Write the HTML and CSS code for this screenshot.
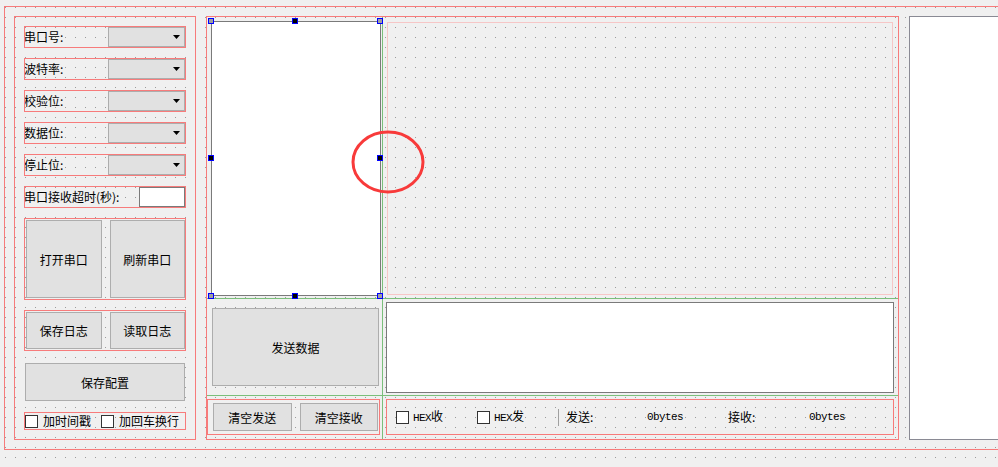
FILE: index.html
```html
<!DOCTYPE html>
<html lang="zh-CN">
<head>
    <meta charset="UTF-8">
    <title>串口调试助手 - 设计器</title>
    <link rel="stylesheet" href="styles.css">
</head>
<body>
    <div class="form lay">
        <!-- left settings column -->
        <div class="side lay">
            <div class="field lay">
                <span class="label">串口号:</span>
                <div class="combo"><svg class="arrow" width="7" height="4" viewBox="0 0 7 4"><polygon points="0,0 7,0 3.5,4" fill="#000"/></svg></div>
            </div>
            <div class="field lay">
                <span class="label">波特率:</span>
                <div class="combo"><svg class="arrow" width="7" height="4" viewBox="0 0 7 4"><polygon points="0,0 7,0 3.5,4" fill="#000"/></svg></div>
            </div>
            <div class="field lay">
                <span class="label">校验位:</span>
                <div class="combo"><svg class="arrow" width="7" height="4" viewBox="0 0 7 4"><polygon points="0,0 7,0 3.5,4" fill="#000"/></svg></div>
            </div>
            <div class="field lay">
                <span class="label">数据位:</span>
                <div class="combo"><svg class="arrow" width="7" height="4" viewBox="0 0 7 4"><polygon points="0,0 7,0 3.5,4" fill="#000"/></svg></div>
            </div>
            <div class="field lay">
                <span class="label">停止位:</span>
                <div class="combo"><svg class="arrow" width="7" height="4" viewBox="0 0 7 4"><polygon points="0,0 7,0 3.5,4" fill="#000"/></svg></div>
            </div>
            <div class="field lay">
                <span class="label">串口接收超时(秒):</span>
                <div class="edit"></div>
            </div>

            <div class="btn-row big lay">
                <button class="btn">打开串口</button>
                <button class="btn">刷新串口</button>
            </div>
            <div class="btn-row lay">
                <button class="btn">保存日志</button>
                <button class="btn">读取日志</button>
            </div>
            <div class="save">
                <button class="btn">保存配置</button>
            </div>
            <div class="checks lay">
                <span class="check"><span class="box"></span><span>加时间戳</span></span>
                <span class="check"><span class="box"></span><span>加回车换行</span></span>
            </div>
        </div>

        <!-- main grid -->
        <div class="main lay">
            <div class="cell recv-cell">
                <div class="browser">
                    <span class="handle corner h-tl"></span>
                    <span class="handle h-tm"></span>
                    <span class="handle corner h-tr"></span>
                    <span class="handle h-ml"></span>
                    <span class="handle h-mr"></span>
                    <span class="handle corner h-bl"></span>
                    <span class="handle h-bm"></span>
                    <span class="handle corner h-br"></span>
                </div>
            </div>
            <div class="cell spacer-cell g-left">
                <div class="spacer"></div>
            </div>
            <div class="cell send-cell g-top">
                <button class="btn">发送数据</button>
            </div>
            <div class="cell input-cell g-top g-left">
                <div class="textedit"></div>
            </div>
            <div class="cell clear-cell g-top">
                <div class="clear-row lay">
                    <button class="btn">清空发送</button>
                    <button class="btn">清空接收</button>
                </div>
            </div>
            <div class="cell status-cell g-top g-left">
                <div class="status lay">
                    <span class="check slot"><span class="box"></span><span><span class="mono">HEX</span>收</span></span>
                    <span class="check slot"><span class="box"></span><span><span class="mono">HEX</span>发</span></span>
                    <span class="vline"></span>
                    <span class="slot">发送:</span>
                    <span class="slot mono">0bytes</span>
                    <span class="slot">接收:</span>
                    <span class="slot mono">0bytes</span>
                </div>
            </div>
        </div>

        <div class="right-pane"></div>
    </div>

    <svg class="mark" width="76" height="66" viewBox="0 0 76 66">
        <ellipse cx="38" cy="33" rx="35" ry="30" fill="none" stroke="#f83a3a" stroke-width="3"/>
    </svg>
</body>
</html>
```

FILE: styles.css
```css
* {
    box-sizing: border-box;
}
html, body {
    margin: 0;
}
body {
    position: relative;
    width: 998px;
    height: 467px;
    overflow: hidden;
    background-color: #f0f0f0;
    /* designer grid dots */
    background-image: radial-gradient(circle at 0.5px 0.5px, #9a9a9a 0.75px, transparent 0.8px);
    background-size: 10px 10px;
    background-position: 5px 7px;
    font-family: "Noto Sans CJK SC", sans-serif;
    font-size: 12px;
    line-height: 1;
    color: #000;
}

/* layout outlines */
.lay {
    outline: 1px solid #f77b7b;
    outline-offset: -1px;
}

.form {
    margin: 6px 0 0 4px;
    width: 1020px;
    height: 444px;
    padding: 10px;
    display: flex;
    gap: 10px;
}

/* left column */
.side {
    width: 182px;
    padding: 10px;
    display: flex;
    flex-direction: column;
    gap: 10px;
}
.field {
    height: 22px;
    display: flex;
}
.label {
    flex: 1;
    display: flex;
    align-items: center;
    white-space: nowrap;
}
.combo {
    width: 77px;
    margin: 1px 1px 1px 0;
    background: #e1e1e1;
    border: 1px solid #adadad;
    display: flex;
    align-items: center;
    justify-content: flex-end;
    padding-right: 4px;
}
.arrow {
    display: block;
}
.edit {
    width: 46px;
    margin: 1px 1px 1px 0;
    background: #fff;
    border: 1px solid #7a7a7a;
}

.btn {
    font-family: "Noto Sans CJK SC", sans-serif;
    font-size: 12px;
    color: #000;
    background: #e1e1e1;
    border: 1px solid #adadad;
    border-radius: 0;
    padding: 0;
    margin: 0;
}
.btn-row {
    height: 41px;
    display: flex;
    gap: 8px;
    padding: 2px 1px 2px 2px;
}
.btn-row.big {
    height: 82px;
}
.btn-row .btn {
    flex: 1;
}
.save {
    height: 41px;
    display: flex;
    padding: 2px 1px 1px 1px;
}
.save .btn {
    flex: 1;
}
.checks {
    height: 18px;
    display: flex;
    align-items: center;
    gap: 10px;
    padding-left: 1px;
}
.check {
    display: flex;
    align-items: center;
    gap: 5px;
    white-space: nowrap;
}
.box {
    width: 13px;
    height: 13px;
    background: #fff;
    border: 1px solid #333;
}

/* main grid */
.main {
    width: 693px;
    padding: 1px;
    display: grid;
    grid-template-columns: 175px 1fr;
    grid-template-rows: 281px 97px 44px;
}
.cell {
    display: flex;
}
.g-left {
    border-left: 1px solid #7bbf7b;
}
.g-top {
    border-top: 1px solid #7bbf7b;
}
.recv-cell {
    padding: 4px 1px 2px 4px;
}
.browser {
    position: relative;
    flex: 1;
    background: #fff;
    border: 1px solid #7a7a7a;
}
.handle {
    position: absolute;
    width: 6px;
    height: 6px;
    border: 1px solid #0000ff;
    background: #000;
}
.handle.corner {
    background: #a0a0a0;
}
.h-tl { left: -4px; top: -4px; }
.h-tm { left: calc(50% - 4px); top: -4px; }
.h-tr { right: -3px; top: -4px; }
.h-ml { left: -4px; top: calc(50% - 4px); }
.h-mr { right: -3px; top: calc(50% - 4px); }
.h-bl { left: -4px; bottom: -4px; }
.h-bm { left: calc(50% - 4px); bottom: -4px; }
.h-br { right: -3px; bottom: -4px; }

.spacer-cell {
    padding: 5px 5px 3px 4px;
}
.spacer {
    flex: 1;
    outline: 1px solid #f6c6c6;
    outline-offset: -1px;
}
.send-cell {
    padding: 9px 3px 9px 5px;
}
.send-cell .btn {
    flex: 1;
}
.input-cell {
    padding: 3px 4px 2px 3px;
}
.textedit {
    flex: 1;
    background: #fff;
    border: 1px solid #7a7a7a;
}
.clear-cell {
    padding: 3px 2px 4px 0;
}
.clear-row {
    flex: 1;
    display: flex;
    gap: 8px;
    padding: 4px 2px 4px 6px;
}
.clear-row .btn {
    flex: 1;
}
.status-cell {
    padding: 3px 4px 4px 3px;
}
.status {
    flex: 1;
    display: flex;
    align-items: center;
    padding-left: 10px;
}
.slot {
    width: 81px;
    white-space: nowrap;
}
.status .check {
    gap: 4px;
}
.mono {
    font-family: "Liberation Mono", monospace;
    font-size: 11px;
    letter-spacing: -0.6px;
}
.vline {
    width: 1px;
    height: 17px;
    background: #a0a0a0;
    margin-right: 7px;
}

.right-pane {
    flex: 1;
    background: #fff;
    border: 1px solid #8a8a94;
}

/* annotation */
.mark {
    position: absolute;
    left: 350px;
    top: 129px;
}
```
